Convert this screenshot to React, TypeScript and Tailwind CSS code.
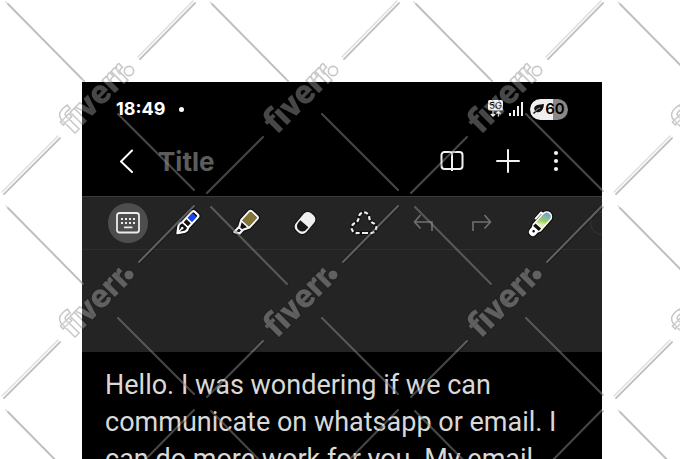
import { useState } from "react";
import type { ReactNode } from "react";

const NOTE = "Hello. I was wondering if we can communicate on whatsapp or email. I can do more work for you. My email";

function Watermark() {
  const lines = "M7 3L83 80M194 2L139 58M118 114L194 190M59 137L3 193";

  return (
    <svg className="absolute inset-0 w-full h-full pointer-events-none" aria-hidden="true">
      <defs>
        <pattern id="wm" width="204" height="204" patternUnits="userSpaceOnUse">
          <g fill="none" strokeLinecap="round">
            <path d={lines} transform="translate(1 1)" stroke="#000" strokeOpacity="0.26" strokeWidth="1.800" />
            <path d={lines} transform="translate(-1 -1)" stroke="#000" strokeOpacity="0.14" strokeWidth="1.400" />
            <path d={lines} stroke="#fff" strokeOpacity="0.28" strokeWidth="2" />
          </g>
          <g
            fill="#fff"
            fillOpacity="0.28"
            stroke="#000"
            strokeOpacity="0.25"
            strokeWidth="1.600"
            style={{ paintOrder: "stroke" }}
          >
            <text
              transform="translate(73 135) rotate(-45)"
              fontFamily="Roboto, 'Liberation Sans', sans-serif"
              fontWeight="900"
              fontSize="34"
            >
              fiverr
            </text>
            <circle cx="129" cy="71" r="4.600" />
          </g>
        </pattern>
      </defs>
      <rect width="100%" height="100%" fill="url(#wm)" />
    </svg>
  );
}

function StatusBar() {
  return (
    <div className="flex items-center justify-between h-[54px] px-[34px] font-['Inter',sans-serif]">
      <div className="flex items-center gap-[14px] text-white">
        <span className="text-[18px] leading-6 font-bold">18:49</span>
        <span className="size-[5px] rounded-full bg-white" />
      </div>
      <div className="flex items-center">
        <svg width="16" height="18" viewBox="0 0 16 18" className="mr-1">
          <rect x="0" y="0" width="15" height="10.500" rx="1.500" fill="#f2f2f2" />
          <text x="7.500" y="8.500" textAnchor="middle" fontFamily="Inter, sans-serif" fontWeight="600" fontSize="9" fill="#111">
            5G
          </text>
          <path d="M5 11v5M2.800 14L5 16.200 7.200 14M10.500 16.500v-5M8.300 13.700l2.200-2.200 2.200 2.200" fill="none" stroke="#f2f2f2" strokeWidth="1.300" />
        </svg>
        <svg width="16" height="16" viewBox="0 0 16 16" className="mr-1.5" fill="#f2f2f2">
          <rect x="1" y="12" width="2" height="3" />
          <rect x="5" y="9" width="2" height="6" />
          <rect x="9" y="5" width="2" height="10" />
          <rect x="13" y="1" width="2" height="14" />
        </svg>
        <div className="flex items-center justify-center gap-px w-[38px] h-[21px] rounded-full bg-linear-to-r from-[#efefef] from-60% to-[#888888] to-60% text-black">
          <svg width="11" height="10" viewBox="0 0 11 10">
            <path d="M11 0C6 .4 1.200 1 1.200 4.600c0 1 .3 1.700 .8 2.300L0 9l1 1 2.200-2C8.500 9.300 10.600 5 11 0z" fill="#111" />
            <path d="M1.800 7.800C3.500 5.500 5 4.600 7 4" stroke="#efefef" strokeWidth="0.700" fill="none" />
          </svg>
          <span className="text-[15px] leading-5 font-semibold">60</span>
        </div>
      </div>
    </div>
  );
}

function Header() {
  const [title, setTitle] = useState("");

  return (
    <header className="flex items-center h-[50px] pl-8 pr-[30px] mb-[10px] text-white">
      <button type="button" aria-label="Back" className="flex items-center justify-center w-6 h-8">
        <svg width="16" height="24" viewBox="0 0 16 24" fill="none" stroke="#fff" strokeWidth="2" strokeLinecap="round" strokeLinejoin="round">
          <path d="M14 1.500L3 12.500 14 23" />
        </svg>
      </button>
      <input
        type="text"
        aria-label="Title"
        placeholder="Title"
        value={title}
        onChange={(e) => setTitle(e.target.value)}
        className="flex-1 min-w-0 ml-5 pt-0.5 bg-transparent outline-none font-['Inter',sans-serif] text-[26px] leading-8 font-bold placeholder:text-[#5c5c5c]"
      />
      <button type="button" aria-label="Reading mode" className="flex items-center justify-center size-8">
        <svg width="24" height="22" viewBox="0 0 24 22" fill="none" stroke="#f2f2f2" strokeWidth="2" strokeLinejoin="round">
          <path d="M12 19H4.500a3 3 0 0 1-3-3V5a3 3 0 0 1 3-3h5.500q2 0 2 2 0-2 2-2h5.500a3 3 0 0 1 3 3v11a3 3 0 0 1-3 3zM12 4v17" />
        </svg>
      </button>
      <button type="button" aria-label="Add" className="flex items-center justify-center size-8 ml-6">
        <svg width="24" height="24" viewBox="0 0 24 24" stroke="#f2f2f2" strokeWidth="2" strokeLinecap="round">
          <path d="M12 1v22M1 12h22" />
        </svg>
      </button>
      <button type="button" aria-label="More options" className="flex items-center justify-center size-8 ml-4">
        <svg width="6" height="22" viewBox="0 0 6 22" fill="#f2f2f2">
          <circle cx="3" cy="3" r="2.100" />
          <circle cx="3" cy="11" r="2.100" />
          <circle cx="3" cy="19" r="2.100" />
        </svg>
      </button>
    </header>
  );
}

function KeyboardIcon() {
  return (
    <svg width="24" height="22" viewBox="0 0 24 22" fill="#ececec">
      <rect x="1" y="1" width="22" height="19.500" rx="2.500" fill="none" stroke="#ececec" strokeWidth="1.800" />
      {[5, 9, 13, 17].map((x) => (
        <g key={x}>
          <rect x={x} y="6" width="2" height="2" />
          <rect x={x} y="10" width="2" height="2" />
        </g>
      ))}
      <rect x="8" y="14.500" width="8.500" height="1.800" rx="0.500" />
    </svg>
  );
}

function PenIcon() {
  const body = "M-4-11.500q0-2 2-2h4q2 0 2 2V2.500q1.600 2.500 .6 5L0 14-4.600 7.500q-1-2.500 .6-5z";
  return (
    <svg width="30" height="30" viewBox="-15 -15 30 30">
      <g transform="rotate(43)" strokeLinejoin="round">
        <path d={body} fill="#111" stroke="#111" strokeWidth="4.500" />
        <path d={body} fill="#111" stroke="#fff" strokeWidth="2.200" />
        <rect x="-3" y="-11" width="6" height="7" rx="0.800" fill="#1746f5" />
        <path d="M-4-3.200h8M-4 2.500h8" stroke="#fff" strokeWidth="1.600" />
        <path d="M0 13V8" stroke="#fff" strokeWidth="1.500" />
        <circle cx="0" cy="7" r="1.300" fill="#fff" />
      </g>
    </svg>
  );
}

function HighlighterIcon() {
  const body = "M-5.500-10.500q0-2 2-2h7q2 0 2 2V1L2.500 7v5l-5 2.500V7L-5.500 1z";
  return (
    <svg width="30" height="30" viewBox="-15 -15 30 30">
      <g transform="rotate(43)" strokeLinejoin="round">
        <path d={body} fill="#111" stroke="#111" strokeWidth="4.500" />
        <path d={body} fill="#111" stroke="#f5f5f5" strokeWidth="2.200" />
        <path d="M-4.500-10q0-1.500 1.500-1.500h6q1.500 0 1.500 1.500V.5h-9z" fill="#857333" />
        <path d="M-5.500 1.500h11M-2.500 8h5" stroke="#f5f5f5" strokeWidth="1.800" />
      </g>
    </svg>
  );
}

function EraserIcon() {
  return (
    <svg width="30" height="30" viewBox="-15 -15 30 30">
      <g transform="rotate(40)">
        <rect x="-7.500" y="-12" width="15" height="24" rx="6" fill="#efefef" stroke="#111" strokeWidth="1.200" />
        <path d="M-5.300 1H5.300v3.500a5.300 5 0 0 1-10.600 0z" fill="#161616" />
      </g>
    </svg>
  );
}

function LassoIcon() {
  const loop = "M13 22H6.500A5.200 5.200 0 0 1 3.500 12.200Q7.200 11.200 7.800 6.500A5.200 5.200 0 0 1 18.200 6.500Q18.800 11.200 22.500 12.200A5.200 5.200 0 0 1 19.500 22z";
  return (
    <svg width="28" height="24" viewBox="-1 0 28 24" fill="none">
      <path d={loop} stroke="#111" strokeWidth="3.800" />
      <path d={loop} stroke="#f0f0f0" strokeWidth="2.200" strokeDasharray="4 2.400" strokeDashoffset="2" />
    </svg>
  );
}

function UndoIcon() {
  return (
    <svg width="20" height="18" viewBox="0 0 20 18" fill="none" stroke="#707070" strokeWidth="1.600">
      <path d="M7.500 1L1.500 8l6 6.500M1.500 8H19v9" />
    </svg>
  );
}

function RedoIcon() {
  return (
    <svg width="20" height="18" viewBox="0 0 20 18" fill="none" stroke="#707070" strokeWidth="1.600">
      <path d="M12.500 1l6 7-6 6.500M18.500 8H1v9" />
    </svg>
  );
}

function ColorPenIcon() {
  const body = "M-4-8.500a4 4 0 0 1 8 0V6L2.500 9v3a2.500 2.500 0 0 1-5 0V9L-4 6z";
  const clip = "M-4.500-8h-2.400v9";
  return (
    <svg width="30" height="30" viewBox="-15 -15 30 30">
      <defs>
        <linearGradient id="ink" x1="0" y1="0" x2="0.300" y2="1">
          <stop offset="0" stopColor="#6d8fe0" />
          <stop offset="0.400" stopColor="#7fb9a8" />
          <stop offset="0.700" stopColor="#9ccd58" />
          <stop offset="1" stopColor="#e4efc0" />
        </linearGradient>
      </defs>
      <g transform="rotate(42)" strokeLinejoin="round">
        <path d={body} fill="#111" stroke="#111" strokeWidth="5.500" />
        <path d={clip} fill="none" stroke="#111" strokeWidth="4" />
        <path d={clip} fill="none" stroke="#fff" strokeWidth="2" />
        <path d={body} fill="#fff" stroke="#fff" strokeWidth="3" />
        <path d="M-4-8.500a4 4 0 0 1 8 0V3h-8z" fill="url(#ink)" />
        <path d="M-3.800 4h7.600v3.500h-7.600z" fill="#111" />
        <circle cx="0" cy="11" r="1.300" fill="#111" />
      </g>
    </svg>
  );
}

const tools: { label: string; icon: ReactNode }[] = [
  { label: "Keyboard", icon: <KeyboardIcon /> },
  { label: "Pen", icon: <PenIcon /> },
  { label: "Highlighter", icon: <HighlighterIcon /> },
  { label: "Eraser", icon: <EraserIcon /> },
  { label: "Lasso", icon: <LassoIcon /> },
  { label: "Undo", icon: <UndoIcon /> },
  { label: "Redo", icon: <RedoIcon /> },
  { label: "Color pen", icon: <ColorPenIcon /> },
];

function Toolbar() {
  const [active, setActive] = useState("Keyboard");

  return (
    <div className="bg-[#242424] border-t border-[#3b3b3b]">
      <div className="flex items-center gap-[19px] h-[53px] pl-[26px] overflow-hidden border-b border-[#303030]">
        {tools.map((tool) => (
          <button
            key={tool.label}
            type="button"
            aria-label={tool.label}
            onClick={() => setActive(tool.label)}
            className={`flex shrink-0 items-center justify-center size-10 rounded-full ${active === tool.label ? "bg-[#4d4d4d]" : ""}`}
          >
            {tool.icon}
          </button>
        ))}
        <span className="shrink-0 ml-2.5 size-6 rounded-full border border-[#353535]" />
      </div>
      <div className="h-[102px]" />
    </div>
  );
}

export default function App() {
  const [note, setNote] = useState(NOTE);

  return (
    <div className="relative flex flex-col h-screen overflow-hidden bg-white pt-[82px] pl-[82px] pr-[78px]">
      <main className="flex flex-col flex-1 min-h-0 bg-black">
        <StatusBar />
        <Header />
        <Toolbar />
        <textarea
          aria-label="Note"
          value={note}
          onChange={(e) => setNote(e.target.value)}
          className="flex-1 min-h-0 w-full pt-[15px] pl-[23px] pr-5 resize-none overflow-hidden bg-transparent outline-none font-['Roboto',sans-serif] text-[27px] leading-[37px] text-[#d9d9d9]"
        />
      </main>
      <Watermark />
    </div>
  );
}
